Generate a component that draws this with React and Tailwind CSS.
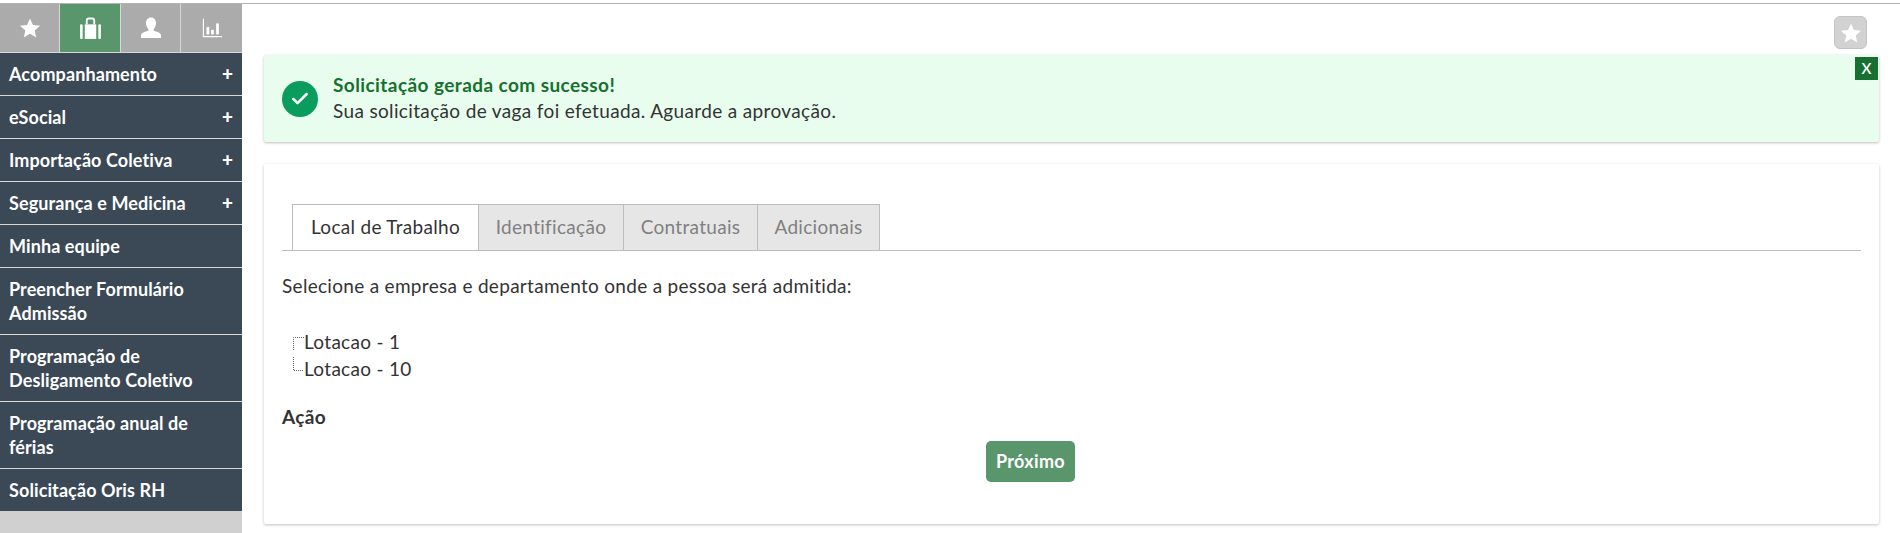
import { Check } from 'lucide-react';

const FONT = "font-['Lato','Noto_Sans',sans-serif]";

const MENU = [
  { label: 'Acompanhamento', plus: true },
  { label: 'eSocial', plus: true },
  { label: 'Importação Coletiva', plus: true },
  { label: 'Segurança e Medicina', plus: true },
  { label: 'Minha equipe' },
  { label: 'Preencher Formulário Admissão' },
  { label: 'Programação de Desligamento Coletivo' },
  { label: 'Programação anual de férias' },
  { label: 'Solicitação Oris RH' },
];

const TABS = [
  { label: 'Identificação', width: 'w-[145px]' },
  { label: 'Contratuais', width: 'w-[134px]' },
  { label: 'Adicionais', width: 'w-[122px]' },
];

function StarIcon({ className }) {
  return (
    <svg viewBox="0 0 24 24" className={className} fill="currentColor">
      <path d="M12 1.500l3.200 7.200 7.800.8-5.900 5.200 1.700 7.700L12 18.400l-6.800 4 1.700-7.700L1 9.500l7.800-.8z" />
    </svg>
  );
}

function BriefcaseIcon() {
  return (
    <svg viewBox="0 0 24 24" className="h-[25px] w-[25px]" fill="currentColor">
      <path d="M7.500 8V4.200C7.500 2.800 8.800 1.500 10.200 1.500h3.600c1.400 0 2.700 1.300 2.700 2.700V8h-1.800V4.400c0-.6-.5-1.100-1.100-1.100h-3.200c-.6 0-1.100.5-1.100 1.100V8z" />
      <rect x="2" y="8" width="2.500" height="14" rx="1" />
      <rect x="6.500" y="8" width="11" height="14" />
      <rect x="19.500" y="8" width="2.500" height="14" rx="1" />
    </svg>
  );
}

function UserIcon() {
  return (
    <svg viewBox="0 0 24 24" className="h-6 w-6" fill="currentColor">
      <path d="M12 1.500c3.200 0 5 2.400 5 5.500 0 2.600-1 4.800-2.400 6v1.800c2.600.9 7.400 1.800 7.400 4.700V22H2v-2.500c0-2.900 4.800-3.800 7.400-4.700V13C8 11.800 7 9.600 7 7c0-3.100 1.800-5.500 5-5.500z" />
    </svg>
  );
}

function ChartIcon() {
  return (
    <svg viewBox="0 0 24 24" className="h-[22px] w-[22px]" fill="currentColor">
      <path d="M2 2h1.200v18.800H23V22H2z" />
      <rect x="6" y="11" width="3" height="8" />
      <rect x="11" y="14" width="3" height="5" />
      <rect x="16.500" y="7" width="3" height="12" />
    </svg>
  );
}

function TreeLine({ first }) {
  return (
    <svg viewBox="0 0 12 24" className="h-6 w-3 shrink-0 text-[#666]" fill="none" stroke="currentColor" strokeDasharray="1 1">
      {first ? <path d="M1.500 20V7.500H12" /> : <path d="M1.500 0V13.500H12" />}
    </svg>
  );
}

export default function App() {
  return (
    <div className={`h-[533px] w-[1900px] overflow-hidden bg-white pt-[3px] text-[#333] ${FONT}`}>
      <div className="h-[1px] bg-[#b4b4b4]" />
      <div className="flex h-[529px]">
        <aside className="flex w-[242px] shrink-0 flex-col bg-[#d0d0d0]">
          <div className="flex h-[49px] shrink-0 border-b border-[#d8d8d8] bg-[#ababab] text-white">
            <div className="flex w-[60px] items-center justify-center border-r border-[#d8d8d8]"><StarIcon className="h-[22px] w-[22px]" /></div>
            <div className="flex w-[61px] items-center justify-center border-r border-[#d8d8d8] bg-[#59966c]"><BriefcaseIcon /></div>
            <div className="flex w-[60px] items-center justify-center border-r border-[#d8d8d8]"><UserIcon /></div>
            <div className="flex flex-1 items-center justify-center"><ChartIcon /></div>
          </div>
          {MENU.map((item) => (
            <div
              key={item.label}
              className="flex items-center justify-between border-b border-[#d8d8d8] bg-[#3b4855] py-[9px] pl-[9px] pr-[9px] text-[18px] leading-[24px] font-bold tracking-[0.1px] text-white last:border-b-0"
            >
              <span className="max-w-[215px]">{item.label}</span>
              {item.plus && <span className="text-[19px] font-black">+</span>}
            </div>
          ))}
        </aside>

        <main className="min-w-0 flex-1 pl-[22px] pr-[21px]">
          <div className="flex justify-end pr-[12px] pt-[12px]">
            <button className="flex h-[33px] w-[33px] items-center justify-center rounded-[6px] border border-[#c4c4c4] bg-[#d2d2d2] text-white">
              <StarIcon className="h-[22px] w-[22px]" />
            </button>
          </div>

          <div className="relative mt-[6px] flex h-[87px] items-center rounded-[2px] bg-[#e8fdee] pl-[18px] shadow-[0_1px_3px_rgba(0,0,0,0.25)]">
            <div className="flex h-9 w-9 items-center justify-center rounded-full bg-[#0a9c5d] text-white">
              <Check className="h-5 w-5" strokeWidth={3} />
            </div>
            <div className="mb-[2px] ml-[15px] text-[19px] leading-[26px] tracking-[0.35px]">
              <p className="font-bold tracking-[0.42px] text-[#17702f]">Solicitação gerada com sucesso!</p>
              <p>Sua solicitação de vaga foi efetuada. Aguarde a aprovação.</p>
            </div>
            <button className="absolute right-[1px] top-[2px] flex h-[23px] w-[23px] items-center justify-center bg-[#17702f] text-[15px] font-semibold text-white">
              X
            </button>
          </div>

          <section className="mt-[22px] h-[360px] rounded-[2px] bg-white pl-[18px] pr-[18px] pt-[40px] text-[19px] tracking-[0.3px] shadow-[0_1px_3px_rgba(0,0,0,0.25)]">
            <div className="flex h-[47px] border-b border-[#bdbdbd] pl-[10px]">
              <div className="flex h-[46px] w-[187px] items-center justify-center border border-b-0 border-[#bdbdbd] bg-white">Local de Trabalho</div>
              {TABS.map((tab) => (
                <div key={tab.label} className={`flex h-[46px] items-center justify-center border border-b-0 border-l-0 border-[#bdbdbd] bg-[#e6e6e6] text-[#808080] ${tab.width}`}>
                  {tab.label}
                </div>
              ))}
            </div>
            <p className="mt-[22px] leading-[26px]">Selecione a empresa e departamento onde a pessoa será admitida:</p>
            <ul className="mt-[29px] pl-[10px] leading-[27px]">
              <li className="flex items-center"><TreeLine first />Lotacao - 1</li>
              <li className="flex items-center"><TreeLine />Lotacao - 10</li>
            </ul>
            <h3 className="mt-[22px] leading-[26px] font-bold">Ação</h3>
            <div className="mt-[11px] ml-[704px]">
              <button className="h-[41px] w-[89px] rounded-[5px] bg-[#59966c] text-[18px] font-bold text-white">Próximo</button>
            </div>
          </section>
        </main>
      </div>
    </div>
  );
}
